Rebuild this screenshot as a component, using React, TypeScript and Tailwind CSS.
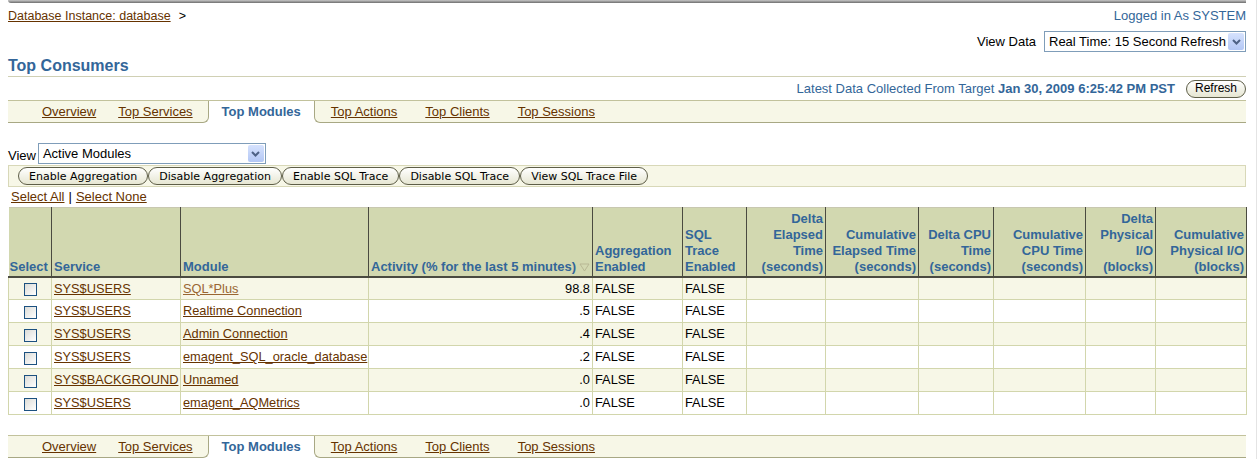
import React from "react";

const link = "text-[#663300] underline";

const tabs = ["Overview", "Top Services", "Top Modules", "Top Actions", "Top Clients", "Top Sessions"];

const TabBar = () => (
  <div className="flex h-[23px] border-t border-[#c2c29c] text-[13px]">
    <div className="flex items-center gap-[22px] rounded-br-[6px] border-b border-r border-[#a8a884] bg-[#f7f7e7] pl-[34px] pr-[15px]">
      <a className={link}>{tabs[0]}</a>
      <a className={link}>{tabs[1]}</a>
    </div>
    <div className="flex items-center bg-white px-[13px] font-bold text-[#336699]">
      {tabs[2]}
    </div>
    <div className="flex flex-1 items-center gap-[28px] rounded-bl-[6px] border-b border-l border-[#a8a884] bg-[#f7f7e7] pl-[16px]">
      <a className={link}>{tabs[3]}</a>
      <a className={link}>{tabs[4]}</a>
      <a className={link}>{tabs[5]}</a>
    </div>
  </div>
);

const SelectBox = ({ label, w }: { label: string; w: string }) => (
  <div className={`flex h-[21px] items-center border border-[#7f9db9] bg-white ${w}`}>
    <span className="flex-1 truncate pl-[4px] text-[13px] text-black">{label}</span>
    <span className="m-[1px] flex h-[17px] w-[16px] items-center justify-center rounded-[2px] bg-gradient-to-b from-[#d6e2fd] to-[#b3c7f5]">
      <svg width="9" height="6" viewBox="0 0 9 6">
        <path d="M1 1 L4.5 4.5 L8 1" fill="none" stroke="#4d6185" strokeWidth="2" />
      </svg>
    </span>
  </div>
);

const Btn = ({ children, font = "dv" }: { children: React.ReactNode; font?: string }) => (
  <button
    className={`h-[18px] rounded-[9px] border border-[#5e5e48] bg-gradient-to-b from-white to-[#e6e6d2] leading-[15px] text-black ${
      font === "dv" ? "px-[10px] font-['DejaVu_Sans',sans-serif] text-[11px]" : "px-[8px] text-[12px]"
    }`}
  >
    {children}
  </button>
);

const Check = () => (
  <span className="inline-block h-[13px] w-[13px] border border-[#1c5180] bg-gradient-to-br from-[#dcdcd7] to-white align-middle" />
);

type Col = { w: string; lines: string[]; right?: boolean; sort?: boolean };

const cols: Col[] = [
  { w: "w-[43px]", lines: ["Select"] },
  { w: "w-[129px]", lines: ["Service"] },
  { w: "w-[188px]", lines: ["Module"] },
  { w: "w-[224px]", lines: ["Activity (% for the last 5 minutes)"], sort: true },
  { w: "w-[90px]", lines: ["Aggregation", "Enabled"] },
  { w: "w-[64px]", lines: ["SQL", "Trace", "Enabled"] },
  { w: "w-[79px]", lines: ["Delta", "Elapsed", "Time", "(seconds)"], right: true },
  { w: "w-[93px]", lines: ["Cumulative", "Elapsed Time", "(seconds)"], right: true },
  { w: "w-[75px]", lines: ["Delta CPU", "Time", "(seconds)"], right: true },
  { w: "w-[92px]", lines: ["Cumulative", "CPU Time", "(seconds)"], right: true },
  { w: "w-[70px]", lines: ["Delta", "Physical", "I/O", "(blocks)"], right: true },
  { w: "w-[91px]", lines: ["Cumulative", "Physical I/O", "(blocks)"], right: true },
];

const rows = [
  { service: "SYS$USERS", module: "SQL*Plus", activity: "98.8", visited: true },
  { service: "SYS$USERS", module: "Realtime Connection", activity: ".5" },
  { service: "SYS$USERS", module: "Admin Connection", activity: ".4" },
  { service: "SYS$USERS", module: "emagent_SQL_oracle_database", activity: ".2" },
  { service: "SYS$BACKGROUND", module: "Unnamed", activity: ".0" },
  { service: "SYS$USERS", module: "emagent_AQMetrics", activity: ".0" },
];

export default function App() {
  return (
    <div className="min-h-[459px] w-[1257px] border-r border-[#e4e4e4] bg-white font-['Liberation_Sans',Arial,sans-serif] text-[13px] text-black">
      <div className="ml-[8px] w-[1238px]">
        <div className="h-[3px] rounded-bl-[3px] bg-gradient-to-b from-[#c8c8c8] to-[#6e6e6e]" />

        <div className="mt-[6px] flex h-[14px] items-center justify-between leading-[14px]">
          <div className="text-[12.5px]">
            <a className={link}>Database Instance: database</a>
            <span className="ml-[8px] text-black">&gt;</span>
          </div>
          <span className="text-[#336699]">Logged in As SYSTEM</span>
        </div>

        <div className="mt-[8px] flex items-center justify-end gap-[8px]">
          <span>View Data</span>
          <SelectBox label="Real Time: 15 Second Refresh" w="w-[202px]" />
        </div>

        <div className="mt-[5px] h-[20px] border-b border-[#d0d0b4] text-[16px] font-bold leading-[18px] text-[#336699]">
          Top Consumers
        </div>

        <div className="mt-[3px] flex h-[17px] items-center justify-end gap-[11px] text-[#336699]">
          <span>
            Latest Data Collected From Target <b>Jan 30, 2009 6:25:42 PM PST</b>
          </span>
          <Btn font="ls">Refresh</Btn>
        </div>

        <div className="mt-[3px]">
          <TabBar />
        </div>

        <div className="mt-[20px] flex items-end gap-[2px]">
          <span className="leading-[17px]">View</span>
          <SelectBox label="Active Modules" w="w-[228px]" />
        </div>

        <div className="mt-[1px] flex h-[22px] items-center border border-[#d8d8b8] bg-[#f7f7e7] pl-[9px]">
          <Btn>Enable Aggregation</Btn>
          <Btn>Disable Aggregation</Btn>
          <Btn>Enable SQL Trace</Btn>
          <Btn>Disable SQL Trace</Btn>
          <Btn>View SQL Trace File</Btn>
        </div>

        <div className="flex h-[20px] items-center pl-[3px]">
          <a className={link}>Select All</a>
          <span className="mx-[4px] text-black">|</span>
          <a className={link}>Select None</a>
        </div>

        <table className="w-[1238px] table-fixed border-collapse border-t border-[#c8c8b0]">
          <thead>
            <tr className="h-[69px] bg-[#d2d8b0]">
              {cols.map((c, i) => (
                <th
                  key={i}
                  className={`${c.w} border-b-2 border-r border-b-[#4a4a40] border-r-[#4a4a40] pb-[1px] align-bottom text-[13px] font-bold leading-[16px] text-[#336699] ${
                    c.right ? "text-right" : "text-left"
                  } ${i === 0 ? "px-[1px]" : "px-[2px]"}`}
                >
                  {c.lines.map((l, j) => (
                    <div key={j} className="whitespace-nowrap">
                      {l}
                      {c.sort && (
                        <svg className="ml-[3px] inline-block" width="11" height="9" viewBox="0 0 11 9">
                          <path d="M1 1 H10 L5.5 8 Z" fill="none" stroke="#b8b894" strokeWidth="1" />
                        </svg>
                      )}
                    </div>
                  ))}
                </th>
              ))}
            </tr>
          </thead>
          <tbody className="text-[12.8px]">
            {rows.map((r, i) => (
              <tr key={i} className={`h-[23px] ${i % 2 === 0 ? "bg-[#f7f7e7]" : "bg-white"}`}>
                <td className="border border-[#d2d6ac] text-center">
                  <Check />
                </td>
                <td className="border border-[#d2d6ac] px-[2px] whitespace-nowrap">
                  <a className={link}>{r.service}</a>
                </td>
                <td className="border border-[#d2d6ac] px-[2px] whitespace-nowrap">
                  <a className={r.visited ? "text-[#996633] underline" : link}>{r.module}</a>
                </td>
                <td className="border border-[#d2d6ac] px-[2px] text-right">{r.activity}</td>
                <td className="border border-[#d2d6ac] px-[2px]">FALSE</td>
                <td className="border border-[#d2d6ac] px-[2px]">FALSE</td>
                {Array.from({ length: 6 }).map((_, k) => (
                  <td key={k} className="border border-[#d2d6ac]" />
                ))}
              </tr>
            ))}
          </tbody>
        </table>

        <div className="mt-[20px]">
          <TabBar />
        </div>
      </div>
    </div>
  );
}
